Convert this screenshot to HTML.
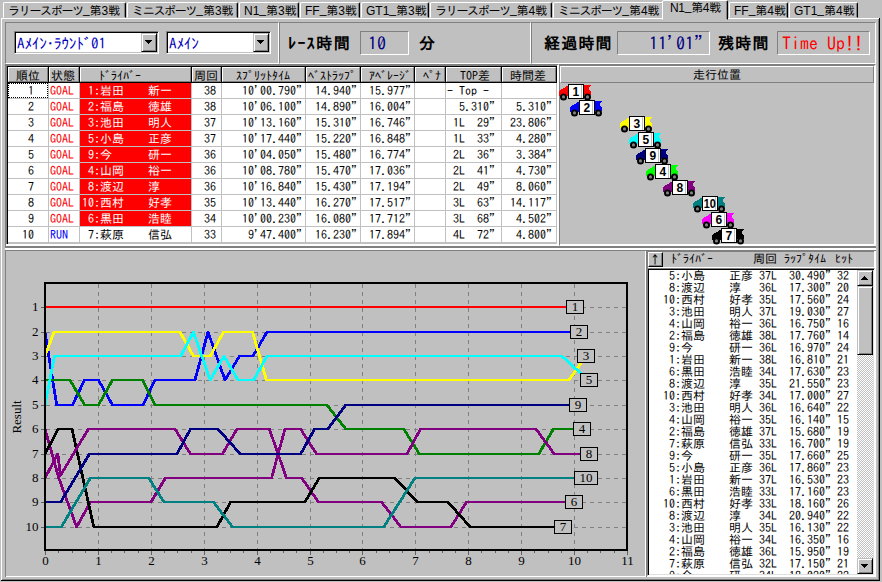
<!DOCTYPE html>
<html lang="ja"><head><meta charset="utf-8"><title>Race Timing</title>
<style>
*{box-sizing:border-box;margin:0;padding:0}
html,body{width:882px;height:582px;overflow:hidden;background:#c0c0c0}
body{position:relative;font:12px/12px "IPAGothic","Liberation Mono",monospace;color:#000;}
.a{position:absolute}
.ln{position:absolute;overflow:hidden}
.sunk{position:absolute;border:1px solid;border-color:#808080 #fff #fff #808080}
.tab{position:absolute;top:2px;height:16px;border:1px solid;border-color:#fff #000 transparent #fff;border-radius:2px 2px 0 0;font:12px/14px "Liberation Sans","IPAGothic",sans-serif;white-space:nowrap;overflow:hidden;padding:1px 0 0 4px;box-shadow:inset -1px 0 0 #808080}
.tab.sel{top:0;height:20px;background:#c0c0c0;z-index:3;padding:0 0 0 7px;letter-spacing:-0.3px}
.tab .k{letter-spacing:-1.3px}
.tab .u{position:relative;top:-2px}
.combo{position:absolute;background:#fff;border:1px solid;border-color:#808080 #fff #fff #808080;box-shadow:inset 1px 1px 0 #000,inset -1px -1px 0 #c0c0c0;font:15px/19px "IPAGothic","Liberation Mono",monospace;color:#0000c0;white-space:nowrap;overflow:hidden}
.combo span{position:absolute;left:2px;top:2px;letter-spacing:-0.1px}
.btn{position:absolute;background:#c0c0c0;border:1px solid;border-color:#fff #000 #000 #fff;box-shadow:inset -1px -1px 0 #808080}
.sb{border-color:#c0c0c0 #000 #000 #c0c0c0;box-shadow:inset 1px 1px 0 #fff,inset -1px -1px 0 #808080}
.arr{position:absolute;width:0;height:0;border:4px solid transparent;border-top-color:#000;border-bottom:0}
.big{position:absolute;font:bold 16px/16px "Liberation Sans","IPAGothic",sans-serif;white-space:nowrap}
.val{position:absolute;font:18px/18px "IPAGothic","Liberation Mono",monospace;white-space:nowrap}
.box{position:absolute;border:1px solid;border-color:#808080 #fff #fff #808080}
.hd{position:absolute;background:#c0c0c0;border:1px solid;border-color:#fff #808080 #808080 #fff;font:12px/12px "IPAGothic","Liberation Mono",monospace;text-align:center;white-space:nowrap;overflow:hidden;padding-top:1px}
.c{position:absolute;height:15px;font:12px/15px "IPAGothic","Liberation Mono",monospace;white-space:pre;overflow:hidden}
.r{text-align:right}
.li{position:absolute;left:664px;height:12px;font:12px/12px "IPAGothic","Liberation Mono",monospace;white-space:pre}
.lh{position:absolute;top:252px;font:12px/12px "IPAGothic","Liberation Mono",monospace;white-space:nowrap}
</style></head><body>

<div class="ln" style="left:1px;top:18px;width:878px;height:1px;background:#fff"></div>
<div class="ln" style="left:1px;top:18px;width:1px;height:563px;background:#fff"></div>
<div class="ln" style="left:878px;top:19px;width:1px;height:561px;background:#808080"></div>
<div class="ln" style="left:879px;top:18px;width:1px;height:563px;background:#000"></div>
<div class="ln" style="left:2px;top:579px;width:877px;height:1px;background:#808080"></div>
<div class="ln" style="left:1px;top:580px;width:879px;height:1px;background:#000"></div>
<div class="tab" style="left:3px;width:123px"><span class="k">ラリースポーツ</span><span class="u">_</span>第3戦</div>
<div class="tab" style="left:127px;width:111px"><span class="k">ミニスポーツ</span><span class="u">_</span>第3戦</div>
<div class="tab" style="left:239px;width:60px">N1<span class="u">_</span>第3戦</div>
<div class="tab" style="left:300px;width:60px">FF<span class="u">_</span>第3戦</div>
<div class="tab" style="left:361px;width:68px">GT1<span class="u">_</span>第3戦</div>
<div class="tab" style="left:430px;width:122px"><span class="k">ラリースポーツ</span><span class="u">_</span>第4戦</div>
<div class="tab" style="left:553px;width:111px"><span class="k">ミニスポーツ</span><span class="u">_</span>第4戦</div>
<div class="tab sel" style="left:662px;width:66px">N1<span class="u">_</span>第4戦</div>
<div class="tab" style="left:729px;width:59px">FF<span class="u">_</span>第4戦</div>
<div class="tab" style="left:789px;width:69px">GT1<span class="u">_</span>第4戦</div>
<div class="sunk" style="left:5px;top:22px;width:274px;height:42px"></div>
<div class="sunk" style="left:279px;top:22px;width:252px;height:42px"></div>
<div class="sunk" style="left:531px;top:22px;width:345px;height:42px"></div>
<div class="combo" style="left:14px;top:31px;width:145px;height:23px"><span>Aﾒｲﾝ･ﾗｳﾝﾄﾞ01</span><div class="btn sb" style="right:1px;top:1px;width:16px;height:19px"></div></div>
<div class="combo" style="left:166px;top:31px;width:105px;height:23px"><span>Aﾒｲﾝ</span><div class="btn sb" style="right:1px;top:1px;width:16px;height:19px"></div></div>
<div class="ln" style="left:145px;top:40px;width:7px;height:1px;background:#000"></div>
<div class="ln" style="left:146px;top:41px;width:5px;height:1px;background:#000"></div>
<div class="ln" style="left:147px;top:42px;width:3px;height:1px;background:#000"></div>
<div class="ln" style="left:148px;top:43px;width:1px;height:1px;background:#000"></div>
<div class="ln" style="left:257px;top:40px;width:7px;height:1px;background:#000"></div>
<div class="ln" style="left:258px;top:41px;width:5px;height:1px;background:#000"></div>
<div class="ln" style="left:259px;top:42px;width:3px;height:1px;background:#000"></div>
<div class="ln" style="left:260px;top:43px;width:1px;height:1px;background:#000"></div>
<div class="big" style="left:288px;top:36px;letter-spacing:1.6px"><span style="letter-spacing:1.4px">ﾚｰｽ</span>時間</div>
<div class="box" style="left:360px;top:31px;width:49px;height:24px"></div>
<div class="val" style="left:368px;top:34px;color:#000080">10</div>
<div class="big" style="left:419px;top:36px">分</div>
<div class="big" style="left:544px;top:36px;letter-spacing:1.2px">経過時間</div>
<div class="box" style="left:617px;top:31px;width:93px;height:24px"></div>
<div class="val" style="left:649px;top:34px;color:#000080">11'01&quot;</div>
<div class="big" style="left:718px;top:36px;letter-spacing:1.2px">残時間</div>
<div class="box" style="left:777px;top:31px;width:93px;height:24px"></div>
<div class="val" style="left:782px;top:34px;color:#ff0000">Time Up!!</div>
<div class="ln" style="left:5px;top:64px;width:553px;height:1px;background:#808080"></div>
<div class="ln" style="left:5px;top:64px;width:1px;height:182px;background:#808080"></div>
<div class="ln" style="left:6px;top:244px;width:553px;height:2px;background:#fff"></div>
<div class="ln" style="left:557px;top:65px;width:2px;height:181px;background:#fff"></div>
<div class="ln" style="left:6px;top:65px;width:551px;height:1px;background:#808080"></div>
<div class="ln" style="left:6px;top:65px;width:1px;height:179px;background:#808080"></div>
<div class="ln" style="left:7px;top:66px;width:550px;height:1px;background:#000"></div>
<div class="ln" style="left:7px;top:66px;width:1px;height:178px;background:#000"></div>
<div class="a" style="left:8px;top:67px;width:549px;height:177px;background:#c0c0c0"></div>
<div class="a" style="left:8px;top:83px;width:548px;height:159px;background:#fff"></div>
<div class="hd" style="left:8px;top:67px;width:40px;height:15px;text-align:left;padding-left:7px">順位</div>
<div class="hd" style="left:49px;top:67px;width:30px;height:15px;text-align:left;padding-left:1px">状態</div>
<div class="hd" style="left:80px;top:67px;width:111px;height:15px;text-align:left;padding-left:18px">ﾄﾞﾗｲﾊﾞｰ</div>
<div class="hd" style="left:192px;top:67px;width:29px;height:15px;text-align:left;padding-left:1px">周回</div>
<div class="hd" style="left:222px;top:67px;width:83px;height:15px;text-align:left;padding-left:13px">ｽﾌﾟﾘｯﾄﾀｲﾑ</div>
<div class="hd" style="left:306px;top:67px;width:54px;height:15px;text-align:left;padding-left:1px">ﾍﾞｽﾄﾗｯﾌﾟ</div>
<div class="hd" style="left:361px;top:67px;width:53px;height:15px;text-align:left;padding-left:7px">ｱﾍﾞﾚｰｼﾞ</div>
<div class="hd" style="left:415px;top:67px;width:30px;height:15px;text-align:left;padding-left:7px">ﾍﾟﾅ</div>
<div class="hd" style="left:446px;top:67px;width:55px;height:15px;text-align:left;padding-left:13px">TOP差</div>
<div class="hd" style="left:502px;top:67px;width:54px;height:15px;text-align:left;padding-left:7px">時間差</div>
<div class="ln" style="left:48px;top:67px;width:1px;height:16px;background:#000"></div>
<div class="ln" style="left:48px;top:83px;width:1px;height:160px;background:#c0c0c0"></div>
<div class="ln" style="left:79px;top:67px;width:1px;height:16px;background:#000"></div>
<div class="ln" style="left:79px;top:83px;width:1px;height:160px;background:#c0c0c0"></div>
<div class="ln" style="left:191px;top:67px;width:1px;height:16px;background:#000"></div>
<div class="ln" style="left:191px;top:83px;width:1px;height:160px;background:#c0c0c0"></div>
<div class="ln" style="left:221px;top:67px;width:1px;height:16px;background:#000"></div>
<div class="ln" style="left:221px;top:83px;width:1px;height:160px;background:#c0c0c0"></div>
<div class="ln" style="left:305px;top:67px;width:1px;height:16px;background:#000"></div>
<div class="ln" style="left:305px;top:83px;width:1px;height:160px;background:#c0c0c0"></div>
<div class="ln" style="left:360px;top:67px;width:1px;height:16px;background:#000"></div>
<div class="ln" style="left:360px;top:83px;width:1px;height:160px;background:#c0c0c0"></div>
<div class="ln" style="left:414px;top:67px;width:1px;height:16px;background:#000"></div>
<div class="ln" style="left:414px;top:83px;width:1px;height:160px;background:#c0c0c0"></div>
<div class="ln" style="left:445px;top:67px;width:1px;height:16px;background:#000"></div>
<div class="ln" style="left:445px;top:83px;width:1px;height:160px;background:#c0c0c0"></div>
<div class="ln" style="left:501px;top:67px;width:1px;height:16px;background:#000"></div>
<div class="ln" style="left:501px;top:83px;width:1px;height:160px;background:#c0c0c0"></div>
<div class="ln" style="left:556px;top:67px;width:1px;height:16px;background:#000"></div>
<div class="ln" style="left:556px;top:83px;width:1px;height:160px;background:#c0c0c0"></div>
<div class="ln" style="left:8px;top:82px;width:549px;height:1px;background:#000"></div>
<div class="ln" style="left:8px;top:98px;width:548px;height:1px;background:#c0c0c0"></div>
<div class="c" style="left:8px;top:83px;width:40px;text-align:center;padding-right:0"> 1</div>
<div class="c" style="left:49px;top:83px;width:30px;color:#ff0000;padding-left:1px">GOAL</div>
<div class="c" style="left:80px;top:83px;width:111px;padding-left:2px;background:#ff0000;color:#fff"> 1:岩田　　新一</div>
<div class="c r" style="left:192px;top:83px;width:29px;padding-right:5px">38</div>
<div class="c r" style="left:222px;top:83px;width:83px;padding-right:3px">10&#x27;00.790&quot;</div>
<div class="c r" style="left:306px;top:83px;width:54px;padding-right:3px">14.940&quot;</div>
<div class="c r" style="left:361px;top:83px;width:53px;padding-right:3px">15.977&quot;</div>
<div class="c" style="left:446px;top:83px;width:55px;padding-left:1px">- Top -</div>
<div class="c r" style="left:502px;top:83px;width:54px;padding-right:4px"></div>
<div class="ln" style="left:8px;top:114px;width:548px;height:1px;background:#c0c0c0"></div>
<div class="c" style="left:8px;top:99px;width:40px;text-align:center;padding-right:0"> 2</div>
<div class="c" style="left:49px;top:99px;width:30px;color:#ff0000;padding-left:1px">GOAL</div>
<div class="c" style="left:80px;top:99px;width:111px;padding-left:2px;background:#ff0000;color:#fff"> 2:福島　　徳雄</div>
<div class="c r" style="left:192px;top:99px;width:29px;padding-right:5px">38</div>
<div class="c r" style="left:222px;top:99px;width:83px;padding-right:3px">10&#x27;06.100&quot;</div>
<div class="c r" style="left:306px;top:99px;width:54px;padding-right:3px">14.890&quot;</div>
<div class="c r" style="left:361px;top:99px;width:53px;padding-right:3px">16.004&quot;</div>
<div class="c" style="left:446px;top:99px;width:55px;padding-left:1px">  5.310&quot;</div>
<div class="c r" style="left:502px;top:99px;width:54px;padding-right:4px">5.310&quot;</div>
<div class="ln" style="left:8px;top:130px;width:548px;height:1px;background:#c0c0c0"></div>
<div class="c" style="left:8px;top:115px;width:40px;text-align:center;padding-right:0"> 3</div>
<div class="c" style="left:49px;top:115px;width:30px;color:#ff0000;padding-left:1px">GOAL</div>
<div class="c" style="left:80px;top:115px;width:111px;padding-left:2px;background:#ff0000;color:#fff"> 3:池田　　明人</div>
<div class="c r" style="left:192px;top:115px;width:29px;padding-right:5px">37</div>
<div class="c r" style="left:222px;top:115px;width:83px;padding-right:3px">10&#x27;13.160&quot;</div>
<div class="c r" style="left:306px;top:115px;width:54px;padding-right:3px">15.310&quot;</div>
<div class="c r" style="left:361px;top:115px;width:53px;padding-right:3px">16.746&quot;</div>
<div class="c" style="left:446px;top:115px;width:55px;padding-left:1px"> 1L  29&quot;</div>
<div class="c r" style="left:502px;top:115px;width:54px;padding-right:4px">23.806&quot;</div>
<div class="ln" style="left:8px;top:146px;width:548px;height:1px;background:#c0c0c0"></div>
<div class="c" style="left:8px;top:131px;width:40px;text-align:center;padding-right:0"> 4</div>
<div class="c" style="left:49px;top:131px;width:30px;color:#ff0000;padding-left:1px">GOAL</div>
<div class="c" style="left:80px;top:131px;width:111px;padding-left:2px;background:#ff0000;color:#fff"> 5:小島　　正彦</div>
<div class="c r" style="left:192px;top:131px;width:29px;padding-right:5px">37</div>
<div class="c r" style="left:222px;top:131px;width:83px;padding-right:3px">10&#x27;17.440&quot;</div>
<div class="c r" style="left:306px;top:131px;width:54px;padding-right:3px">15.220&quot;</div>
<div class="c r" style="left:361px;top:131px;width:53px;padding-right:3px">16.848&quot;</div>
<div class="c" style="left:446px;top:131px;width:55px;padding-left:1px"> 1L  33&quot;</div>
<div class="c r" style="left:502px;top:131px;width:54px;padding-right:4px">4.280&quot;</div>
<div class="ln" style="left:8px;top:162px;width:548px;height:1px;background:#c0c0c0"></div>
<div class="c" style="left:8px;top:147px;width:40px;text-align:center;padding-right:0"> 5</div>
<div class="c" style="left:49px;top:147px;width:30px;color:#ff0000;padding-left:1px">GOAL</div>
<div class="c" style="left:80px;top:147px;width:111px;padding-left:2px;background:#ff0000;color:#fff"> 9:今　　　研一</div>
<div class="c r" style="left:192px;top:147px;width:29px;padding-right:5px">36</div>
<div class="c r" style="left:222px;top:147px;width:83px;padding-right:3px">10&#x27;04.050&quot;</div>
<div class="c r" style="left:306px;top:147px;width:54px;padding-right:3px">15.480&quot;</div>
<div class="c r" style="left:361px;top:147px;width:53px;padding-right:3px">16.774&quot;</div>
<div class="c" style="left:446px;top:147px;width:55px;padding-left:1px"> 2L  36&quot;</div>
<div class="c r" style="left:502px;top:147px;width:54px;padding-right:4px">3.384&quot;</div>
<div class="ln" style="left:8px;top:178px;width:548px;height:1px;background:#c0c0c0"></div>
<div class="c" style="left:8px;top:163px;width:40px;text-align:center;padding-right:0"> 6</div>
<div class="c" style="left:49px;top:163px;width:30px;color:#ff0000;padding-left:1px">GOAL</div>
<div class="c" style="left:80px;top:163px;width:111px;padding-left:2px;background:#ff0000;color:#fff"> 4:山岡　　裕一</div>
<div class="c r" style="left:192px;top:163px;width:29px;padding-right:5px">36</div>
<div class="c r" style="left:222px;top:163px;width:83px;padding-right:3px">10&#x27;08.780&quot;</div>
<div class="c r" style="left:306px;top:163px;width:54px;padding-right:3px">15.470&quot;</div>
<div class="c r" style="left:361px;top:163px;width:53px;padding-right:3px">17.036&quot;</div>
<div class="c" style="left:446px;top:163px;width:55px;padding-left:1px"> 2L  41&quot;</div>
<div class="c r" style="left:502px;top:163px;width:54px;padding-right:4px">4.730&quot;</div>
<div class="ln" style="left:8px;top:194px;width:548px;height:1px;background:#c0c0c0"></div>
<div class="c" style="left:8px;top:179px;width:40px;text-align:center;padding-right:0"> 7</div>
<div class="c" style="left:49px;top:179px;width:30px;color:#ff0000;padding-left:1px">GOAL</div>
<div class="c" style="left:80px;top:179px;width:111px;padding-left:2px;background:#ff0000;color:#fff"> 8:渡辺　　淳</div>
<div class="c r" style="left:192px;top:179px;width:29px;padding-right:5px">36</div>
<div class="c r" style="left:222px;top:179px;width:83px;padding-right:3px">10&#x27;16.840&quot;</div>
<div class="c r" style="left:306px;top:179px;width:54px;padding-right:3px">15.430&quot;</div>
<div class="c r" style="left:361px;top:179px;width:53px;padding-right:3px">17.194&quot;</div>
<div class="c" style="left:446px;top:179px;width:55px;padding-left:1px"> 2L  49&quot;</div>
<div class="c r" style="left:502px;top:179px;width:54px;padding-right:4px">8.060&quot;</div>
<div class="ln" style="left:8px;top:210px;width:548px;height:1px;background:#c0c0c0"></div>
<div class="c" style="left:8px;top:195px;width:40px;text-align:center;padding-right:0"> 8</div>
<div class="c" style="left:49px;top:195px;width:30px;color:#ff0000;padding-left:1px">GOAL</div>
<div class="c" style="left:80px;top:195px;width:111px;padding-left:2px;background:#ff0000;color:#fff">10:西村　　好孝</div>
<div class="c r" style="left:192px;top:195px;width:29px;padding-right:5px">35</div>
<div class="c r" style="left:222px;top:195px;width:83px;padding-right:3px">10&#x27;13.440&quot;</div>
<div class="c r" style="left:306px;top:195px;width:54px;padding-right:3px">16.270&quot;</div>
<div class="c r" style="left:361px;top:195px;width:53px;padding-right:3px">17.517&quot;</div>
<div class="c" style="left:446px;top:195px;width:55px;padding-left:1px"> 3L  63&quot;</div>
<div class="c r" style="left:502px;top:195px;width:54px;padding-right:4px">14.117&quot;</div>
<div class="ln" style="left:8px;top:226px;width:548px;height:1px;background:#c0c0c0"></div>
<div class="c" style="left:8px;top:211px;width:40px;text-align:center;padding-right:0"> 9</div>
<div class="c" style="left:49px;top:211px;width:30px;color:#ff0000;padding-left:1px">GOAL</div>
<div class="c" style="left:80px;top:211px;width:111px;padding-left:2px;background:#ff0000;color:#fff"> 6:黒田　　浩睦</div>
<div class="c r" style="left:192px;top:211px;width:29px;padding-right:5px">34</div>
<div class="c r" style="left:222px;top:211px;width:83px;padding-right:3px">10&#x27;00.230&quot;</div>
<div class="c r" style="left:306px;top:211px;width:54px;padding-right:3px">16.080&quot;</div>
<div class="c r" style="left:361px;top:211px;width:53px;padding-right:3px">17.712&quot;</div>
<div class="c" style="left:446px;top:211px;width:55px;padding-left:1px"> 3L  68&quot;</div>
<div class="c r" style="left:502px;top:211px;width:54px;padding-right:4px">4.502&quot;</div>
<div class="ln" style="left:8px;top:242px;width:548px;height:1px;background:#c0c0c0"></div>
<div class="c" style="left:8px;top:227px;width:40px;text-align:center;padding-right:0">10</div>
<div class="c" style="left:49px;top:227px;width:30px;color:#0000ff;padding-left:1px">RUN</div>
<div class="c" style="left:80px;top:227px;width:111px;padding-left:2px;"> 7:萩原　　信弘</div>
<div class="c r" style="left:192px;top:227px;width:29px;padding-right:5px">33</div>
<div class="c r" style="left:222px;top:227px;width:83px;padding-right:3px">9&#x27;47.400&quot;</div>
<div class="c r" style="left:306px;top:227px;width:54px;padding-right:3px">16.230&quot;</div>
<div class="c r" style="left:361px;top:227px;width:53px;padding-right:3px">17.894&quot;</div>
<div class="c" style="left:446px;top:227px;width:55px;padding-left:1px"> 4L  72&quot;</div>
<div class="c r" style="left:502px;top:227px;width:54px;padding-right:4px">4.800&quot;</div>
<div class="a" style="left:8px;top:83px;width:40px;height:15px;border:1px dotted #000"></div>
<div class="ln" style="left:559px;top:64px;width:316px;height:1px;background:#808080"></div>
<div class="ln" style="left:559px;top:64px;width:1px;height:181px;background:#808080"></div>
<div class="ln" style="left:560px;top:244px;width:316px;height:2px;background:#fff"></div>
<div class="ln" style="left:875px;top:65px;width:1px;height:181px;background:#fff"></div>
<div class="ln" style="left:874px;top:66px;width:1px;height:180px;background:#fff"></div>
<div class="ln" style="left:559px;top:65px;width:315px;height:1px;background:#808080"></div>
<div class="hd" style="left:560px;top:66px;width:314px;height:17px;padding-top:1px">走行位置</div>
<svg class="a" style="left:0;top:0" width="882" height="582" viewBox="0 0 882 582" shape-rendering="crispEdges">
<g transform="translate(559,84)">
<polygon points="0,7 8,2 9,2 9,12 0,12" fill="#ff0000"/>
<polygon points="25,1 32,1 30,4 30,5 32,8 32,11 25,11" fill="#ff0000"/>
<rect x="9.5" y="0.5" width="15" height="14" fill="#fff" stroke="#000"/>
<rect x="22" y="1" width="1" height="13" fill="#c0c0c0"/>
<g shape-rendering="auto"><circle cx="4.5" cy="12.9" r="3.5" fill="#000"/><circle cx="4.5" cy="12.9" r="1.6" fill="#808080"/></g>
<g shape-rendering="auto"><circle cx="28.5" cy="12.9" r="3.5" fill="#000"/><circle cx="28.5" cy="12.9" r="1.6" fill="#808080"/></g>
<text x="16.8" y="12" text-anchor="middle" font-family='"Liberation Sans",sans-serif' font-weight="bold" font-size="12" fill="#000" shape-rendering="auto">1</text>
</g>
<g transform="translate(570,100)">
<polygon points="0,7 8,2 9,2 9,12 0,12" fill="#0000ff"/>
<polygon points="25,1 32,1 30,4 30,5 32,8 32,11 25,11" fill="#0000ff"/>
<rect x="9.5" y="0.5" width="15" height="14" fill="#fff" stroke="#000"/>
<rect x="22" y="1" width="1" height="13" fill="#c0c0c0"/>
<g shape-rendering="auto"><circle cx="4.5" cy="12.9" r="3.5" fill="#000"/><circle cx="4.5" cy="12.9" r="1.6" fill="#808080"/></g>
<g shape-rendering="auto"><circle cx="28.5" cy="12.9" r="3.5" fill="#000"/><circle cx="28.5" cy="12.9" r="1.6" fill="#808080"/></g>
<text x="16.8" y="12" text-anchor="middle" font-family='"Liberation Sans",sans-serif' font-weight="bold" font-size="12" fill="#000" shape-rendering="auto">2</text>
</g>
<g transform="translate(620,116)">
<polygon points="0,7 8,2 9,2 9,12 0,12" fill="#ffff00"/>
<polygon points="25,1 32,1 30,4 30,5 32,8 32,11 25,11" fill="#ffff00"/>
<rect x="9.5" y="0.5" width="15" height="14" fill="#fff" stroke="#000"/>
<rect x="22" y="1" width="1" height="13" fill="#c0c0c0"/>
<g shape-rendering="auto"><circle cx="4.5" cy="12.9" r="3.5" fill="#000"/><circle cx="4.5" cy="12.9" r="1.6" fill="#808080"/></g>
<g shape-rendering="auto"><circle cx="28.5" cy="12.9" r="3.5" fill="#000"/><circle cx="28.5" cy="12.9" r="1.6" fill="#808080"/></g>
<text x="16.8" y="12" text-anchor="middle" font-family='"Liberation Sans",sans-serif' font-weight="bold" font-size="12" fill="#000" shape-rendering="auto">3</text>
</g>
<g transform="translate(629,132)">
<polygon points="0,7 8,2 9,2 9,12 0,12" fill="#00ffff"/>
<polygon points="25,1 32,1 30,4 30,5 32,8 32,11 25,11" fill="#00ffff"/>
<rect x="9.5" y="0.5" width="15" height="14" fill="#fff" stroke="#000"/>
<rect x="22" y="1" width="1" height="13" fill="#c0c0c0"/>
<g shape-rendering="auto"><circle cx="4.5" cy="12.9" r="3.5" fill="#000"/><circle cx="4.5" cy="12.9" r="1.6" fill="#808080"/></g>
<g shape-rendering="auto"><circle cx="28.5" cy="12.9" r="3.5" fill="#000"/><circle cx="28.5" cy="12.9" r="1.6" fill="#808080"/></g>
<text x="16.8" y="12" text-anchor="middle" font-family='"Liberation Sans",sans-serif' font-weight="bold" font-size="12" fill="#000" shape-rendering="auto">5</text>
</g>
<g transform="translate(636,148)">
<polygon points="0,7 8,2 9,2 9,12 0,12" fill="#000080"/>
<polygon points="25,1 32,1 30,4 30,5 32,8 32,11 25,11" fill="#000080"/>
<rect x="9.5" y="0.5" width="15" height="14" fill="#fff" stroke="#000"/>
<rect x="22" y="1" width="1" height="13" fill="#c0c0c0"/>
<g shape-rendering="auto"><circle cx="4.5" cy="12.9" r="3.5" fill="#000"/><circle cx="4.5" cy="12.9" r="1.6" fill="#808080"/></g>
<g shape-rendering="auto"><circle cx="28.5" cy="12.9" r="3.5" fill="#000"/><circle cx="28.5" cy="12.9" r="1.6" fill="#808080"/></g>
<text x="16.8" y="12" text-anchor="middle" font-family='"Liberation Sans",sans-serif' font-weight="bold" font-size="12" fill="#000" shape-rendering="auto">9</text>
</g>
<g transform="translate(646,164)">
<polygon points="0,7 8,2 9,2 9,12 0,12" fill="#00ff00"/>
<polygon points="25,1 32,1 30,4 30,5 32,8 32,11 25,11" fill="#00ff00"/>
<rect x="9.5" y="0.5" width="15" height="14" fill="#fff" stroke="#000"/>
<rect x="22" y="1" width="1" height="13" fill="#c0c0c0"/>
<g shape-rendering="auto"><circle cx="4.5" cy="12.9" r="3.5" fill="#000"/><circle cx="4.5" cy="12.9" r="1.6" fill="#808080"/></g>
<g shape-rendering="auto"><circle cx="28.5" cy="12.9" r="3.5" fill="#000"/><circle cx="28.5" cy="12.9" r="1.6" fill="#808080"/></g>
<text x="16.8" y="12" text-anchor="middle" font-family='"Liberation Sans",sans-serif' font-weight="bold" font-size="12" fill="#000" shape-rendering="auto">4</text>
</g>
<g transform="translate(663,180)">
<polygon points="0,7 8,2 9,2 9,12 0,12" fill="#800080"/>
<polygon points="25,1 32,1 30,4 30,5 32,8 32,11 25,11" fill="#800080"/>
<rect x="9.5" y="0.5" width="15" height="14" fill="#fff" stroke="#000"/>
<rect x="22" y="1" width="1" height="13" fill="#c0c0c0"/>
<g shape-rendering="auto"><circle cx="4.5" cy="12.9" r="3.5" fill="#000"/><circle cx="4.5" cy="12.9" r="1.6" fill="#808080"/></g>
<g shape-rendering="auto"><circle cx="28.5" cy="12.9" r="3.5" fill="#000"/><circle cx="28.5" cy="12.9" r="1.6" fill="#808080"/></g>
<text x="16.8" y="12" text-anchor="middle" font-family='"Liberation Sans",sans-serif' font-weight="bold" font-size="12" fill="#000" shape-rendering="auto">8</text>
</g>
<g transform="translate(693,196)">
<polygon points="0,7 8,2 9,2 9,12 0,12" fill="#008080"/>
<polygon points="25,1 32,1 30,4 30,5 32,8 32,11 25,11" fill="#008080"/>
<rect x="9.5" y="0.5" width="15" height="14" fill="#fff" stroke="#000"/>
<rect x="22" y="1" width="1" height="13" fill="#c0c0c0"/>
<g shape-rendering="auto"><circle cx="4.5" cy="12.9" r="3.5" fill="#000"/><circle cx="4.5" cy="12.9" r="1.6" fill="#808080"/></g>
<g shape-rendering="auto"><circle cx="28.5" cy="12.9" r="3.5" fill="#000"/><circle cx="28.5" cy="12.9" r="1.6" fill="#808080"/></g>
<text x="16.8" y="12" text-anchor="middle" font-family='"Liberation Sans",sans-serif' font-weight="bold" font-size="12" fill="#000" shape-rendering="auto" textLength="12" lengthAdjust="spacingAndGlyphs">10</text>
</g>
<g transform="translate(702,212)">
<polygon points="0,7 8,2 9,2 9,12 0,12" fill="#ff00ff"/>
<polygon points="25,1 32,1 30,4 30,5 32,8 32,11 25,11" fill="#ff00ff"/>
<rect x="9.5" y="0.5" width="15" height="14" fill="#fff" stroke="#000"/>
<rect x="22" y="1" width="1" height="13" fill="#c0c0c0"/>
<g shape-rendering="auto"><circle cx="4.5" cy="12.9" r="3.5" fill="#000"/><circle cx="4.5" cy="12.9" r="1.6" fill="#808080"/></g>
<g shape-rendering="auto"><circle cx="28.5" cy="12.9" r="3.5" fill="#000"/><circle cx="28.5" cy="12.9" r="1.6" fill="#808080"/></g>
<text x="16.8" y="12" text-anchor="middle" font-family='"Liberation Sans",sans-serif' font-weight="bold" font-size="12" fill="#000" shape-rendering="auto">6</text>
</g>
<g transform="translate(712,228)">
<polygon points="0,7 8,2 9,2 9,12 0,12" fill="#000000"/>
<polygon points="25,1 32,1 30,4 30,5 32,8 32,11 25,11" fill="#000000"/>
<rect x="9.5" y="0.5" width="15" height="14" fill="#fff" stroke="#000"/>
<rect x="22" y="1" width="1" height="13" fill="#c0c0c0"/>
<g shape-rendering="auto"><circle cx="4.5" cy="12.9" r="3.5" fill="#000"/><circle cx="4.5" cy="12.9" r="1.6" fill="#808080"/></g>
<g shape-rendering="auto"><circle cx="28.5" cy="12.9" r="3.5" fill="#000"/><circle cx="28.5" cy="12.9" r="1.6" fill="#808080"/></g>
<text x="16.8" y="12" text-anchor="middle" font-family='"Liberation Sans",sans-serif' font-weight="bold" font-size="12" fill="#000" shape-rendering="auto">7</text>
</g>
</svg>
<div class="ln" style="left:5px;top:246px;width:871px;height:2px;background:#808080"></div>
<div class="ln" style="left:5px;top:248px;width:871px;height:2px;background:#fff"></div>
<div class="ln" style="left:5px;top:250px;width:641px;height:1px;background:#808080"></div>
<div class="ln" style="left:5px;top:250px;width:1px;height:327px;background:#808080"></div>
<div class="ln" style="left:6px;top:576px;width:640px;height:1px;background:#fff"></div>
<div class="ln" style="left:645px;top:251px;width:1px;height:326px;background:#fff"></div>
<svg class="a" style="left:0;top:0" width="882" height="582" viewBox="0 0 882 582">
<g stroke="#808080" stroke-width="1" stroke-dasharray="4 4" shape-rendering="crispEdges" fill="none">
<line x1="98.5" y1="284" x2="98.5" y2="549"/>
<line x1="151.5" y1="284" x2="151.5" y2="549"/>
<line x1="204.5" y1="284" x2="204.5" y2="549"/>
<line x1="257.5" y1="284" x2="257.5" y2="549"/>
<line x1="310.5" y1="284" x2="310.5" y2="549"/>
<line x1="362.5" y1="284" x2="362.5" y2="549"/>
<line x1="415.5" y1="284" x2="415.5" y2="549"/>
<line x1="468.5" y1="284" x2="468.5" y2="549"/>
<line x1="521.5" y1="284" x2="521.5" y2="549"/>
<line x1="574.5" y1="284" x2="574.5" y2="549"/>
<line x1="46" y1="307.5" x2="626" y2="307.5"/>
<line x1="46" y1="332.5" x2="626" y2="332.5"/>
<line x1="46" y1="356.5" x2="626" y2="356.5"/>
<line x1="46" y1="380.5" x2="626" y2="380.5"/>
<line x1="46" y1="405.5" x2="626" y2="405.5"/>
<line x1="46" y1="429.5" x2="626" y2="429.5"/>
<line x1="46" y1="454.5" x2="626" y2="454.5"/>
<line x1="46" y1="478.5" x2="626" y2="478.5"/>
<line x1="46" y1="502.5" x2="626" y2="502.5"/>
<line x1="46" y1="527.5" x2="626" y2="527.5"/>
</g>
<g fill="none" stroke-width="2.8" stroke-linejoin="round" shape-rendering="crispEdges">
<polyline stroke="#ff0000" points="45.0,307.0 575.0,307.0"/>
<polyline stroke="#0000ff" points="45.0,332.0 56.7,405.0 72.4,405.0 84.6,380.0 98.5,380.0 112.5,405.0 143.0,405.0 155.0,380.0 195.0,380.0 208.0,332.0 225.0,380.0 239.6,356.0 253.0,356.0 267.0,332.0 579.0,332.0"/>
<polyline stroke="#ffff00" points="45.0,356.0 54.0,332.0 180.0,332.0 193.4,356.0 210.2,356.0 223.6,332.0 252.6,332.0 266.4,380.0 569.0,380.0 586.0,356.0"/>
<polyline stroke="#008000" points="45.0,380.0 70.0,380.0 84.6,405.0 98.5,405.0 112.5,380.0 142.7,380.0 155.0,405.0 326.8,405.0 345.8,429.0 403.8,429.0 419.4,454.0 538.7,454.0 553.4,429.0 582.0,429.0"/>
<polyline stroke="#00ffff" points="45.0,405.0 54.5,356.0 180.7,356.0 193.4,332.0 210.2,380.0 224.0,356.0 238.0,380.0 253.7,380.0 267.0,356.0 561.8,356.0 588.0,380.0"/>
<polyline stroke="#800080" points="45.0,429.0 58.8,478.0 76.6,527.0 90.4,502.0 151.0,502.0 165.4,478.0 271.6,478.0 278.1,454.0 286.5,478.0 301.7,478.0 318.4,502.0 381.5,502.0 400.9,527.0 450.9,527.0 466.5,502.0 574.5,502.0"/>
<polyline stroke="#000000" points="45.0,454.0 58.2,429.0 72.0,429.0 93.8,527.0 216.9,527.0 230.7,502.0 305.0,502.0 319.3,478.0 394.9,478.0 417.2,502.0 448.0,502.0 470.3,527.0 563.5,527.0"/>
<polyline stroke="#800080" points="45.0,478.0 57.8,454.0 60.5,475.4 88.4,429.0 175.0,429.0 190.5,454.0 222.5,454.0 237.0,429.0 269.3,429.0 278.1,454.0 285.0,429.0 300.6,429.0 316.5,454.0 407.0,454.0 420.5,429.0 536.0,429.0 554.3,454.0 589.0,454.0"/>
<polyline stroke="#000080" points="45.0,502.0 60.8,502.0 89.4,454.0 177.0,454.0 190.5,429.0 218.0,429.0 240.3,454.0 300.6,454.0 314.6,429.0 327.9,429.0 345.8,405.0 578.0,405.0"/>
<polyline stroke="#008080" points="45.0,527.0 61.3,527.0 90.4,478.0 148.7,478.0 163.9,502.0 213.5,502.0 232.5,527.0 383.7,527.0 415.0,478.0 586.0,478.0"/>
</g>
<g shape-rendering="crispEdges" fill="none" stroke="#000" stroke-width="2"><rect x="45" y="283" width="582" height="267"/></g>
<g shape-rendering="crispEdges" stroke="#606060" stroke-width="1">
<line x1="41" y1="307.5" x2="44" y2="307.5"/>
<line x1="41" y1="332.5" x2="44" y2="332.5"/>
<line x1="41" y1="356.5" x2="44" y2="356.5"/>
<line x1="41" y1="380.5" x2="44" y2="380.5"/>
<line x1="41" y1="405.5" x2="44" y2="405.5"/>
<line x1="41" y1="429.5" x2="44" y2="429.5"/>
<line x1="41" y1="454.5" x2="44" y2="454.5"/>
<line x1="41" y1="478.5" x2="44" y2="478.5"/>
<line x1="41" y1="502.5" x2="44" y2="502.5"/>
<line x1="41" y1="527.5" x2="44" y2="527.5"/>
<line x1="45.5" y1="551" x2="45.5" y2="555"/>
<line x1="58.5" y1="551" x2="58.5" y2="553"/>
<line x1="72.5" y1="551" x2="72.5" y2="553"/>
<line x1="85.5" y1="551" x2="85.5" y2="553"/>
<line x1="98.5" y1="551" x2="98.5" y2="555"/>
<line x1="111.5" y1="551" x2="111.5" y2="553"/>
<line x1="124.5" y1="551" x2="124.5" y2="553"/>
<line x1="138.5" y1="551" x2="138.5" y2="553"/>
<line x1="151.5" y1="551" x2="151.5" y2="555"/>
<line x1="164.5" y1="551" x2="164.5" y2="553"/>
<line x1="177.5" y1="551" x2="177.5" y2="553"/>
<line x1="191.5" y1="551" x2="191.5" y2="553"/>
<line x1="204.5" y1="551" x2="204.5" y2="555"/>
<line x1="217.5" y1="551" x2="217.5" y2="553"/>
<line x1="230.5" y1="551" x2="230.5" y2="553"/>
<line x1="243.5" y1="551" x2="243.5" y2="553"/>
<line x1="257.5" y1="551" x2="257.5" y2="555"/>
<line x1="270.5" y1="551" x2="270.5" y2="553"/>
<line x1="283.5" y1="551" x2="283.5" y2="553"/>
<line x1="296.5" y1="551" x2="296.5" y2="553"/>
<line x1="310.5" y1="551" x2="310.5" y2="555"/>
<line x1="323.5" y1="551" x2="323.5" y2="553"/>
<line x1="336.5" y1="551" x2="336.5" y2="553"/>
<line x1="349.5" y1="551" x2="349.5" y2="553"/>
<line x1="362.5" y1="551" x2="362.5" y2="555"/>
<line x1="376.5" y1="551" x2="376.5" y2="553"/>
<line x1="389.5" y1="551" x2="389.5" y2="553"/>
<line x1="402.5" y1="551" x2="402.5" y2="553"/>
<line x1="415.5" y1="551" x2="415.5" y2="555"/>
<line x1="429.5" y1="551" x2="429.5" y2="553"/>
<line x1="442.5" y1="551" x2="442.5" y2="553"/>
<line x1="455.5" y1="551" x2="455.5" y2="553"/>
<line x1="468.5" y1="551" x2="468.5" y2="555"/>
<line x1="481.5" y1="551" x2="481.5" y2="553"/>
<line x1="495.5" y1="551" x2="495.5" y2="553"/>
<line x1="508.5" y1="551" x2="508.5" y2="553"/>
<line x1="521.5" y1="551" x2="521.5" y2="555"/>
<line x1="534.5" y1="551" x2="534.5" y2="553"/>
<line x1="548.5" y1="551" x2="548.5" y2="553"/>
<line x1="561.5" y1="551" x2="561.5" y2="553"/>
<line x1="574.5" y1="551" x2="574.5" y2="555"/>
<line x1="587.5" y1="551" x2="587.5" y2="553"/>
<line x1="600.5" y1="551" x2="600.5" y2="553"/>
<line x1="614.5" y1="551" x2="614.5" y2="553"/>
<line x1="627.5" y1="551" x2="627.5" y2="555"/>
</g>
<g font-family='"Liberation Serif",serif' font-size="13" fill="#000">
<text x="38.5" y="311" text-anchor="end">1</text>
<text x="38.5" y="336" text-anchor="end">2</text>
<text x="38.5" y="360" text-anchor="end">3</text>
<text x="38.5" y="384" text-anchor="end">4</text>
<text x="38.5" y="409" text-anchor="end">5</text>
<text x="38.5" y="433" text-anchor="end">6</text>
<text x="38.5" y="458" text-anchor="end">7</text>
<text x="38.5" y="482" text-anchor="end">8</text>
<text x="38.5" y="506" text-anchor="end">9</text>
<text x="38.5" y="531" text-anchor="end">10</text>
<text x="45.5" y="565" text-anchor="middle">0</text>
<text x="98.5" y="565" text-anchor="middle">1</text>
<text x="151.5" y="565" text-anchor="middle">2</text>
<text x="204.5" y="565" text-anchor="middle">3</text>
<text x="257.5" y="565" text-anchor="middle">4</text>
<text x="310.5" y="565" text-anchor="middle">5</text>
<text x="362.5" y="565" text-anchor="middle">6</text>
<text x="415.5" y="565" text-anchor="middle">7</text>
<text x="468.5" y="565" text-anchor="middle">8</text>
<text x="521.5" y="565" text-anchor="middle">9</text>
<text x="574.5" y="565" text-anchor="middle">10</text>
<text x="627.5" y="565" text-anchor="middle">11</text>
<text transform="translate(20.5,417) rotate(-90)" text-anchor="middle">Result</text>
<rect x="566.5" y="300.5" width="17" height="13" fill="#c0c0c0" stroke="#000" stroke-width="1" shape-rendering="crispEdges"/>
<text x="575" y="310.5" text-anchor="middle">1</text>
<rect x="570.5" y="325.5" width="17" height="13" fill="#c0c0c0" stroke="#000" stroke-width="1" shape-rendering="crispEdges"/>
<text x="579" y="335.5" text-anchor="middle">2</text>
<rect x="577.5" y="349.5" width="17" height="13" fill="#c0c0c0" stroke="#000" stroke-width="1" shape-rendering="crispEdges"/>
<text x="586" y="359.5" text-anchor="middle">3</text>
<rect x="580.5" y="373.5" width="17" height="13" fill="#c0c0c0" stroke="#000" stroke-width="1" shape-rendering="crispEdges"/>
<text x="589" y="383.5" text-anchor="middle">5</text>
<rect x="569.5" y="398.5" width="17" height="13" fill="#c0c0c0" stroke="#000" stroke-width="1" shape-rendering="crispEdges"/>
<text x="578" y="408.5" text-anchor="middle">9</text>
<rect x="573.5" y="422.5" width="17" height="13" fill="#c0c0c0" stroke="#000" stroke-width="1" shape-rendering="crispEdges"/>
<text x="582" y="432.5" text-anchor="middle">4</text>
<rect x="580.5" y="447.5" width="17" height="13" fill="#c0c0c0" stroke="#000" stroke-width="1" shape-rendering="crispEdges"/>
<text x="589" y="457.5" text-anchor="middle">8</text>
<rect x="574.5" y="471.5" width="23" height="13" fill="#c0c0c0" stroke="#000" stroke-width="1" shape-rendering="crispEdges"/>
<text x="586" y="481.5" text-anchor="middle">10</text>
<rect x="565.5" y="495.5" width="17" height="13" fill="#c0c0c0" stroke="#000" stroke-width="1" shape-rendering="crispEdges"/>
<text x="574" y="505.5" text-anchor="middle">6</text>
<rect x="554.5" y="520.5" width="17" height="13" fill="#c0c0c0" stroke="#000" stroke-width="1" shape-rendering="crispEdges"/>
<text x="563" y="530.5" text-anchor="middle">7</text>
</g>
</svg>
<div class="ln" style="left:646px;top:250px;width:230px;height:1px;background:#808080"></div>
<div class="ln" style="left:646px;top:250px;width:1px;height:327px;background:#808080"></div>
<div class="ln" style="left:647px;top:576px;width:229px;height:1px;background:#fff"></div>
<div class="ln" style="left:875px;top:251px;width:1px;height:326px;background:#fff"></div>
<div class="ln" style="left:647px;top:251px;width:228px;height:1px;background:#808080"></div>
<div class="ln" style="left:647px;top:251px;width:1px;height:17px;background:#808080"></div>
<div class="ln" style="left:648px;top:267px;width:227px;height:1px;background:#fff"></div>
<div class="ln" style="left:874px;top:251px;width:1px;height:17px;background:#fff"></div>
<div class="btn" style="left:648px;top:252px;width:15px;height:15px"></div>
<div class="a" style="left:649px;top:253px;width:12px;font:12px/12px "IPAGothic","Liberation Mono",monospace;text-align:center">↑</div>
<div class="lh" style="left:671px">ﾄﾞﾗｲﾊﾞｰ</div>
<div class="lh" style="left:753px">周回</div>
<div class="lh" style="left:784px">ﾗｯﾌﾟﾀｲﾑ</div>
<div class="lh" style="left:835px">ﾋｯﾄ</div>
<div class="a" style="left:647px;top:268px;width:228px;height:308px;background:#fff;border:1px solid;border-color:#808080 #fff #fff #808080;box-shadow:inset 1px 1px 0 #000,inset -1px -1px 0 #dfdfdf;overflow:hidden">
</div>
<div class="a" style="left:649px;top:270px;width:208px;height:304px;overflow:hidden">
<div class="li" style="left:14px;top:-1px"> 5:小島　　正彦 37L  30.490&quot; 32</div>
<div class="li" style="left:14px;top:11px"> 8:渡辺　　淳　 36L  17.300&quot; 20</div>
<div class="li" style="left:14px;top:23px">10:西村　　好孝 35L  17.560&quot; 24</div>
<div class="li" style="left:14px;top:35px"> 3:池田　　明人 37L  19.030&quot; 27</div>
<div class="li" style="left:14px;top:47px"> 4:山岡　　裕一 36L  16.750&quot; 16</div>
<div class="li" style="left:14px;top:59px"> 2:福島　　徳雄 38L  17.760&quot; 14</div>
<div class="li" style="left:14px;top:71px"> 9:今　　　研一 36L  16.970&quot; 24</div>
<div class="li" style="left:14px;top:83px"> 1:岩田　　新一 38L  16.810&quot; 21</div>
<div class="li" style="left:14px;top:95px"> 6:黒田　　浩睦 34L  17.630&quot; 23</div>
<div class="li" style="left:14px;top:107px"> 8:渡辺　　淳　 35L  21.550&quot; 23</div>
<div class="li" style="left:14px;top:119px">10:西村　　好孝 34L  17.000&quot; 27</div>
<div class="li" style="left:14px;top:131px"> 3:池田　　明人 36L  16.640&quot; 22</div>
<div class="li" style="left:14px;top:143px"> 4:山岡　　裕一 35L  16.140&quot; 15</div>
<div class="li" style="left:14px;top:155px"> 2:福島　　徳雄 37L  15.680&quot; 19</div>
<div class="li" style="left:14px;top:167px"> 7:萩原　　信弘 33L  16.700&quot; 19</div>
<div class="li" style="left:14px;top:179px"> 9:今　　　研一 35L  17.660&quot; 25</div>
<div class="li" style="left:14px;top:191px"> 5:小島　　正彦 36L  17.860&quot; 23</div>
<div class="li" style="left:14px;top:203px"> 1:岩田　　新一 37L  16.530&quot; 23</div>
<div class="li" style="left:14px;top:215px"> 6:黒田　　浩睦 33L  17.160&quot; 23</div>
<div class="li" style="left:14px;top:227px">10:西村　　好孝 33L  18.160&quot; 26</div>
<div class="li" style="left:14px;top:239px"> 8:渡辺　　淳　 34L  20.940&quot; 22</div>
<div class="li" style="left:14px;top:251px"> 3:池田　　明人 35L  16.130&quot; 22</div>
<div class="li" style="left:14px;top:263px"> 4:山岡　　裕一 34L  16.350&quot; 16</div>
<div class="li" style="left:14px;top:275px"> 2:福島　　徳雄 36L  15.950&quot; 19</div>
<div class="li" style="left:14px;top:287px"> 7:萩原　　信弘 32L  17.150&quot; 21</div>
<div class="li" style="left:14px;top:299px"> 9:今　　　研一 34L  18.020&quot; 22</div>
</div>
<div class="a" style="left:857px;top:270px;width:16px;height:304px;background:#e0e0e0;background-image:conic-gradient(#fff 25%,#c0c0c0 0 50%,#fff 0 75%,#c0c0c0 0);background-size:2px 2px"></div>
<div class="btn" style="left:857px;top:270px;width:16px;height:16px;box-shadow:inset 1px 1px 0 #fff,inset -1px -1px 0 #808080;border-color:#c0c0c0 #000 #000 #c0c0c0"></div>
<div class="ln" style="left:861px;top:279px;width:7px;height:1px;background:#000"></div>
<div class="ln" style="left:862px;top:278px;width:5px;height:1px;background:#000"></div>
<div class="ln" style="left:863px;top:277px;width:3px;height:1px;background:#000"></div>
<div class="ln" style="left:864px;top:276px;width:1px;height:1px;background:#000"></div>
<div class="btn" style="left:857px;top:286px;width:16px;height:69px;box-shadow:inset 1px 1px 0 #fff,inset -1px -1px 0 #808080;border-color:#c0c0c0 #000 #000 #c0c0c0"></div>
<div class="btn" style="left:857px;top:558px;width:16px;height:16px;box-shadow:inset 1px 1px 0 #fff,inset -1px -1px 0 #808080;border-color:#c0c0c0 #000 #000 #c0c0c0"></div>
<div class="ln" style="left:861px;top:564px;width:7px;height:1px;background:#000"></div>
<div class="ln" style="left:862px;top:565px;width:5px;height:1px;background:#000"></div>
<div class="ln" style="left:863px;top:566px;width:3px;height:1px;background:#000"></div>
<div class="ln" style="left:864px;top:567px;width:1px;height:1px;background:#000"></div>
</body></html>
